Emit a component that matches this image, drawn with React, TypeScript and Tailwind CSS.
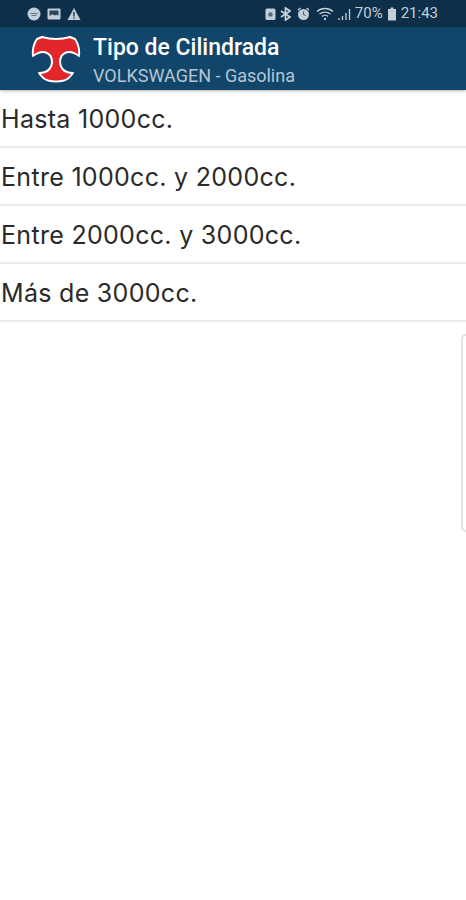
import { ReactNode } from 'react'

const options = ['Hasta 1000cc.', 'Entre 1000cc. y 2000cc.', 'Entre 2000cc. y 3000cc.', 'Más de 3000cc.']

function Icon({ w, children, className }: { w: number; children: ReactNode; className?: string }) {
  return (
    <svg width={w} height="14" viewBox={`0 0 ${w} 14`} className={`shrink-0 ${className ?? ''}`}>
      {children}
    </svg>
  )
}

function StatusBar() {
  return (
    <div className="h-[27px] bg-[#0e2f4a] flex items-center pl-[27px] pr-[28px] text-[#c3ced6]">
      <div className="flex items-center gap-[6px]">
        <Icon w={14}>
          <circle cx="7" cy="7" r="6.5" fill="#c3ced6" />
          <path d="M3.5 6.5h7M4.5 8.5h5" stroke="#5d7688" strokeWidth="1.2" />
        </Icon>
        <Icon w={14}>
          <rect x="0.5" y="1.5" width="13" height="11" rx="1" fill="#c3ced6" />
          <path d="M2.5 3.5h9v5h-9z" fill="#26465f" />
          <path d="M2.5 10l3-3 2 2 2-1.5 2 2.5z" fill="#c3ced6" />
        </Icon>
        <Icon w={14}>
          <path d="M7 1l6.5 12H.5z" fill="#c3ced6" />
          <path d="M7 5v4.5M7 10.5v1.2" stroke="#0e2f4a" strokeWidth="1.3" />
        </Icon>
      </div>
      <div className="ml-auto flex items-center">
        <Icon w={11}>
          <rect x="0.5" y="1.5" width="10" height="11.5" rx="1.5" fill="#c3ced6" />
          <circle cx="5.5" cy="7.5" r="2.2" fill="#52697c" />
        </Icon>
        <Icon w={11} className="ml-[4px]">
          <path d="M1 4l9 6-4.5 3V1L10 4 1 10" fill="none" stroke="#c3ced6" strokeWidth="1.8" />
        </Icon>
        <Icon w={13} className="ml-[6px]">
          <circle cx="6.5" cy="7.5" r="5.5" fill="#c3ced6" />
          <path d="M1 3l2.5-2M12 3L9.500 1" stroke="#c3ced6" strokeWidth="1.5" />
          <path d="M6.500 4.500v3l2 1" fill="none" stroke="#52697c" strokeWidth="1.2" />
        </Icon>
        <Icon w={18} className="ml-[6px]">
          <path d="M1 4.500c4.500-4 11.500-4 16 0M3.500 7c3-2.600 8-2.600 11 0M6 9.500c1.600-1.400 4.400-1.400 6 0" fill="none" stroke="#c3ced6" strokeWidth="1.3" />
          <circle cx="9" cy="12" r="1.200" fill="#c3ced6" />
        </Icon>
        <Icon w={14} className="ml-[4px]">
          <path d="M1 11v2M4.500 9v4M8 6v7M11.500 2v11" stroke="#c3ced6" strokeWidth="1.3" />
        </Icon>
        <span className="text-[15px] leading-none font-['Roboto',sans-serif] ml-[3px]">70%</span>
        <Icon w={10} className="ml-[4px]">
          <path d="M3.500 0.500h3v1.500h2.500v11.500h-8v-11.500h2.500z" fill="#c3ced6" />
        </Icon>
        <span className="text-[15px] leading-none font-['Roboto',sans-serif] ml-[4px]">21:43</span>
      </div>
    </div>
  )
}

function Logo() {
  return (
    <svg width="50" height="48" viewBox="0 0 50 48" className="shrink-0">
      <path
        d="M11 2Q25 6 39 2L44 4Q49 11 48 21Q37 13 30.500 21Q27 28 31.500 34Q35 38 42 38Q38 44 33 45.500Q25 47.500 17 45.500Q12 44 8 38Q15 38 18.500 34Q23 28 19.500 21Q13 13 2 21Q1 11 6 4Z"
        fill="#e3262c"
        stroke="#ffffff"
        strokeWidth="2"
        strokeLinejoin="round"
      />
    </svg>
  )
}

export default function App() {
  return (
    <div className="relative min-h-[900px] bg-white overflow-hidden">
      <StatusBar />
      <header className="h-[63px] bg-[#114569] flex items-center pl-[31px] shadow-[0_1px_3px_rgba(0,0,0,0.3)]">
        <Logo />
        <div className="ml-[12px] mt-[7px] font-['Roboto',sans-serif]">
          <div className="text-[23px] leading-[28px] font-medium text-white">Tipo de Cilindrada</div>
          <div className="text-[18px] leading-[28px] text-[#b4c6d4]">VOLKSWAGEN - Gasolina</div>
        </div>
      </header>
      <ul className="font-['Inter',sans-serif]">
        {options.map((o) => (
          <li key={o} className="h-[58px] pl-[1px] pt-[3px] flex items-center border-b-2 border-[#ececec] text-[25px] text-[#2a2a2a] tracking-[0.3px]">
            {o}
          </li>
        ))}
      </ul>
      <div className="absolute right-0 top-[334px] w-[5px] h-[198px] border-l-2 border-y-2 border-[#e4e4e4] rounded-l-[6px]" />
    </div>
  )
}
